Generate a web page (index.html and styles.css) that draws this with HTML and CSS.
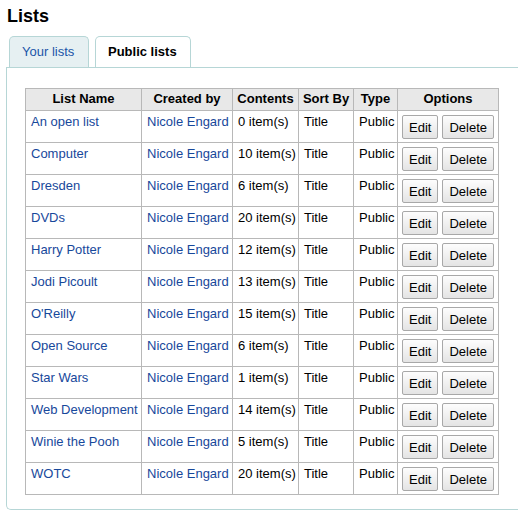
FILE: index.html
```html
<!DOCTYPE html>
<html>
<head>
  <meta charset="UTF-8">
  <title>Lists</title>
  <link rel="stylesheet" href="styles.css">
</head>
<body>
  <h1>Lists</h1>

  <div class="tabs">
    <a class="tab" href="#">Your lists</a>
    <a class="tab active" href="#">Public lists</a>
  </div>

  <div class="panel">
    <table class="lists">
      <colgroup>
        <col class="c-name">
        <col class="c-owner">
        <col class="c-count">
        <col class="c-sort">
        <col class="c-type">
        <col class="c-opts">
      </colgroup>
      <thead>
        <tr>
          <th>List Name</th>
          <th>Created by</th>
          <th>Contents</th>
          <th>Sort By</th>
          <th>Type</th>
          <th>Options</th>
        </tr>
      </thead>
      <tbody>
        <tr><td><a href="#">An open list</a></td><td><a href="#">Nicole Engard</a></td><td>0 item(s)</td><td>Title</td><td>Public</td><td class="opts"><button>Edit</button><button>Delete</button></td></tr>
        <tr><td><a href="#">Computer</a></td><td><a href="#">Nicole Engard</a></td><td>10 item(s)</td><td>Title</td><td>Public</td><td class="opts"><button>Edit</button><button>Delete</button></td></tr>
        <tr><td><a href="#">Dresden</a></td><td><a href="#">Nicole Engard</a></td><td>6 item(s)</td><td>Title</td><td>Public</td><td class="opts"><button>Edit</button><button>Delete</button></td></tr>
        <tr><td><a href="#">DVDs</a></td><td><a href="#">Nicole Engard</a></td><td>20 item(s)</td><td>Title</td><td>Public</td><td class="opts"><button>Edit</button><button>Delete</button></td></tr>
        <tr><td><a href="#">Harry Potter</a></td><td><a href="#">Nicole Engard</a></td><td>12 item(s)</td><td>Title</td><td>Public</td><td class="opts"><button>Edit</button><button>Delete</button></td></tr>
        <tr><td><a href="#">Jodi Picoult</a></td><td><a href="#">Nicole Engard</a></td><td>13 item(s)</td><td>Title</td><td>Public</td><td class="opts"><button>Edit</button><button>Delete</button></td></tr>
        <tr><td><a href="#">O'Reilly</a></td><td><a href="#">Nicole Engard</a></td><td>15 item(s)</td><td>Title</td><td>Public</td><td class="opts"><button>Edit</button><button>Delete</button></td></tr>
        <tr><td><a href="#">Open Source</a></td><td><a href="#">Nicole Engard</a></td><td>6 item(s)</td><td>Title</td><td>Public</td><td class="opts"><button>Edit</button><button>Delete</button></td></tr>
        <tr><td><a href="#">Star Wars</a></td><td><a href="#">Nicole Engard</a></td><td>1 item(s)</td><td>Title</td><td>Public</td><td class="opts"><button>Edit</button><button>Delete</button></td></tr>
        <tr><td><a href="#">Web Development</a></td><td><a href="#">Nicole Engard</a></td><td>14 item(s)</td><td>Title</td><td>Public</td><td class="opts"><button>Edit</button><button>Delete</button></td></tr>
        <tr><td><a href="#">Winie the Pooh</a></td><td><a href="#">Nicole Engard</a></td><td>5 item(s)</td><td>Title</td><td>Public</td><td class="opts"><button>Edit</button><button>Delete</button></td></tr>
        <tr><td><a href="#">WOTC</a></td><td><a href="#">Nicole Engard</a></td><td>20 item(s)</td><td>Title</td><td>Public</td><td class="opts"><button>Edit</button><button>Delete</button></td></tr>
      </tbody>
    </table>
  </div>
</body>
</html>
```

FILE: styles.css
```css
/* Page */
body {
  margin: 0;
  padding: 5px 0 0 6px;
  font-family: "Liberation Sans", Arial, sans-serif;
  font-size: 13px;
  color: #000;
  background: #fff;
}

a {
  color: #17489b;
  text-decoration: none;
}

h1 {
  margin: 0 0 9px 1px;
  font-size: 18px;
  line-height: 22px;
  font-weight: bold;
}

/* Tabs */
.tabs {
  display: flex;
  gap: 6px;
  padding-left: 3px;
}

.tab {
  display: block;
  height: 30px;
  line-height: 30px;
  padding: 0 12px;
  border: 1px solid #b6d6d6;
  border-bottom: none;
  border-radius: 5px 5px 0 0;
  background: #e6f0f2;
  color: #1a55a8;
}

.tab:first-child {
  width: 54px;
}

.tab.active {
  position: relative;
  top: 1px;
  margin-top: -1px;
  background: #fff;
  color: #000;
  font-weight: bold;
  width: 70px;
  z-index: 1;
}

/* Panel */
.panel {
  padding: 20px 0 14px 18px;
  border: 1px solid #b6d6d6;
  border-right: none;
  border-radius: 0 0 0 5px;
}

/* Table */
.lists {
  border-collapse: collapse;
  table-layout: fixed;
  width: 473px;
}

.c-name { width: 116px; }
.c-owner { width: 91px; }
.c-count { width: 66px; }
.c-sort { width: 55px; }
.c-type { width: 44px; }
.c-opts { width: 101px; }

.lists th,
.lists td {
  border: 1px solid #b8b8b8;
  padding: 3px 5px;
  text-align: left;
  vertical-align: top;
  line-height: 15px;
  white-space: nowrap;
  overflow: hidden;
}

.lists th {
  background: #e8e8e8;
  text-align: center;
  padding: 2px 3px 3px;
  line-height: 16px;
}

.lists td {
  height: 24px;
}

.lists td.opts {
  padding: 4px 2px 3px 4px;
}

.opts button {
  font-family: "Liberation Sans", Arial, sans-serif;
  font-size: 13px;
  height: 24px;
  padding: 0 6px;
  margin-right: 4px;
  border: 1px solid #a8a8a8;
  border-radius: 2px;
  background: linear-gradient(#fdfdfd, #e4e4e4);
  color: #000;
  vertical-align: top;
}

.opts button:last-child {
  margin-right: 0;
}
```
